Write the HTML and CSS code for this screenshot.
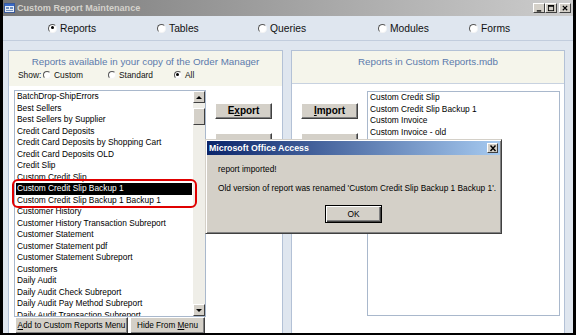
FILE: index.html
```html
<!DOCTYPE html>
<html lang="en">
<head>
    <meta charset="UTF-8">
    <title>Custom Report Maintenance</title>
    <link rel="stylesheet" href="styles.css">
</head>
<body>
<div class="window">
    <div class="titlebar">
        <svg class="app-icon" width="11" height="10" viewBox="0 0 11 10">
            <rect x="0.5" y="0.5" width="10" height="9" fill="#e8eef8" stroke="#3a5a9a"/>
            <rect x="1" y="1" width="9" height="2" fill="#3a6ac8"/>
            <rect x="2" y="4" width="3" height="2" fill="#7090c0"/>
            <rect x="6" y="4" width="3" height="2" fill="#7090c0"/>
            <rect x="2" y="7" width="7" height="1" fill="#7090c0"/>
        </svg>
        <span class="title">Custom Report Maintenance</span>
        <div class="win-buttons">
            <span class="wbtn"><svg width="9" height="8" viewBox="0 0 9 8"><rect x="2" y="6" width="5" height="1.5" fill="#000"/></svg></span>
            <span class="wbtn"><svg width="9" height="8" viewBox="0 0 9 8"><rect x="1.5" y="0.5" width="6" height="6" fill="none" stroke="#000"/><rect x="1.5" y="0.5" width="6" height="1.5" fill="#000"/></svg></span>
            <span class="wbtn close"><svg width="9" height="8" viewBox="0 0 9 8"><path d="M2 1 L7 6 M7 1 L2 6" stroke="#000" stroke-width="1.4"/></svg></span>
        </div>
    </div>

    <div class="form">
        <div class="types">
            <div class="opt opt-reports"><span class="radio on"></span>Reports</div>
            <div class="opt opt-tables"><span class="radio"></span>Tables</div>
            <div class="opt opt-queries"><span class="radio"></span>Queries</div>
            <div class="opt opt-modules"><span class="radio"></span>Modules</div>
            <div class="opt"><span class="radio"></span>Forms</div>
        </div>

        <div class="panels">
            <section class="panel panel-left">
                <div class="panel-head">
                    <div class="panel-title">Reports available in your copy of the Order Manager</div>
                    <div class="show-row">
                        <span class="show-label">Show:</span>
                        <span class="sopt sopt-custom"><span class="radio small"></span>Custom</span>
                        <span class="sopt sopt-standard"><span class="radio small"></span>Standard</span>
                        <span class="sopt"><span class="radio small on"></span>All</span>
                    </div>
                </div>
                <div class="panel-body">
                    <div class="list-col">
                        <div class="listbox">
                            <ul class="items">
                                <li>BatchDrop-ShipErrors</li>
                                <li>Best Sellers</li>
                                <li>Best Sellers by Supplier</li>
                                <li>Credit Card Deposits</li>
                                <li>Credit Card Deposits by Shopping Cart</li>
                                <li>Credit Card Deposits OLD</li>
                                <li>Credit Slip</li>
                                <li>Custom Credit Slip</li>
                                <li class="selected">Custom Credit Slip Backup 1</li>
                                <li>Custom Credit Slip Backup 1 Backup 1</li>
                                <li>Customer History</li>
                                <li>Customer History Transaction Subreport</li>
                                <li>Customer Statement</li>
                                <li>Customer Statement pdf</li>
                                <li>Customer Statement Subreport</li>
                                <li>Customers</li>
                                <li>Daily Audit</li>
                                <li>Daily Audit Check Subreport</li>
                                <li>Daily Audit Pay Method Subreport</li>
                                <li>Daily Audit Transaction Subreport</li>
                            </ul>
                            <div class="scrollbar">
                                <span class="sb-btn"><span class="arrow-up"></span></span>
                                <span class="sb-track"><span class="sb-thumb"></span></span>
                                <span class="sb-btn"><span class="arrow-down"></span></span>
                            </div>
                        </div>
                        <div class="menu-buttons">
                            <span class="btn small-btn btn-add"><u>A</u>dd to Custom Reports Menu</span>
                            <span class="btn small-btn btn-hide">Hide From <u>M</u>enu</span>
                        </div>
                    </div>
                    <div class="side-buttons">
                        <span class="btn big-btn">E<u>x</u>port</span>
                        <span class="btn big-btn"></span>
                    </div>
                </div>
            </section>

            <section class="panel panel-right">
                <div class="panel-head short">
                    <div class="panel-title">Reports in Custom Reports.mdb</div>
                </div>
                <div class="panel-body right-body">
                    <div class="side-buttons">
                        <span class="btn big-btn"><u>I</u>mport</span>
                        <span class="btn big-btn"></span>
                    </div>
                    <div class="listbox listbox-right">
                        <ul class="items">
                            <li>Custom Credit Slip</li>
                            <li>Custom Credit Slip Backup 1</li>
                            <li>Custom Invoice</li>
                            <li>Custom Invoice - old</li>
                        </ul>
                    </div>
                </div>
            </section>
        </div>
    </div>

    <div class="highlight"></div>

    <div class="dialog">
        <div class="dlg-title">
            <span>Microsoft Office Access</span>
            <span class="dlg-close"><svg width="8" height="7" viewBox="0 0 8 7"><path d="M1.5 0.5 L6.5 6 M6.5 0.5 L1.5 6" stroke="#000" stroke-width="1.4"/></svg></span>
        </div>
        <div class="dlg-body">
            <p class="dlg-line">report imported!</p>
            <p class="dlg-line second">Old version of report was renamed 'Custom Credit Slip Backup 1 Backup 1'.</p>
        </div>
        <div class="dlg-actions">
            <span class="btn ok-btn">OK</span>
        </div>
    </div>
</div>
</body>
</html>
```

FILE: styles.css
```css
body {
    margin: 0;
    background: #000;
    font-family: "Liberation Sans", Arial, sans-serif;
}

.window {
    position: relative;
    width: 576px;
    height: 335px;
    box-sizing: border-box;
    border-left: 3px solid #000;
    border-right: 3px solid #000;
    border-bottom: 2px solid #000;
    background: #dfe6ef;
    overflow: hidden;
}

/* window title bar (inactive) */
.titlebar {
    height: 16px;
    display: flex;
    align-items: center;
    background: linear-gradient(to right, #777, #cdcdcd);
}

.app-icon {
    margin: 0 2px 0 1px;
}

.title {
    color: #d4d2cc;
    font-weight: bold;
    font-size: 9.1px;
}

.win-buttons {
    margin-left: auto;
    margin-right: 2px;
    display: flex;
}

.wbtn {
    width: 12px;
    height: 10px;
    box-sizing: border-box;
    background: #d4d0c8;
    border: 1px solid;
    border-color: #fff #404040 #404040 #fff;
    display: flex;
    align-items: center;
    justify-content: center;
}

.wbtn svg {
    width: 8px;
    height: 7px;
}

.wbtn.close {
    margin-left: 2px;
}

/* object type row */
.types {
    height: 24px;
    border-bottom: 1px solid #c2cddd;
    display: flex;
    align-items: center;
    padding-left: 45px;
    font-size: 10.3px;
    color: #111;
}

.opt {
    display: flex;
    align-items: center;
    gap: 3px;
}

.opt-reports { width: 109px; }
.opt-tables { width: 101px; }
.opt-queries { width: 120px; }
.opt-modules { width: 91px; }

.radio {
    position: relative;
    width: 9px;
    height: 9px;
    box-sizing: border-box;
    border-radius: 50%;
    border: 1.5px solid;
    border-color: #555 #f4f4f4 #f4f4f4 #555;
    background: #fff;
    flex: none;
}

.radio.small {
    width: 8px;
    height: 8px;
}

.radio.on::after {
    content: "";
    position: absolute;
    left: 1.5px;
    top: 1.5px;
    width: 3px;
    height: 3px;
    border-radius: 50%;
    background: #000;
}

.radio.small.on::after {
    left: 1px;
    top: 1px;
}

/* the two panels */
.panels {
    display: flex;
    gap: 8px;
    padding-left: 5px;
    margin-top: 9px;
}

.panel {
    height: 283px;
    box-sizing: border-box;
    border: 1px solid #b3c1d6;
    border-bottom: none;
    background: #fff;
}

.panel-left { width: 275px; }
.panel-right { width: 274px; }

.panel-head {
    background: #f5f5eb;
    padding: 4px 0 5px;
}

.panel-head.short {
    height: 33px;
    box-sizing: border-box;
    padding: 4px 0 0;
    border-bottom: 1px solid #c8d2e0;
}

.panel-title {
    text-align: center;
    line-height: 13px;
    font-size: 9.8px;
    color: #5b7aab;
}

.show-row {
    margin-top: 1px;
    line-height: 12px;
    font-size: 8.4px;
    padding-left: 9px;
    display: flex;
    align-items: center;
    color: #111;
}

.show-label { width: 25px; }

.sopt {
    display: flex;
    align-items: center;
    gap: 3px;
}

.sopt-custom { width: 65px; }
.sopt-standard { width: 66px; }

.panel-body {
    display: flex;
    padding: 4px 0 0 5px;
}

.right-body {
    padding: 7px 0 0 9px;
}

.list-col {
    width: 192px;
}

.listbox {
    height: 227px;
    box-sizing: border-box;
    border: 1px solid #a9b8cc;
    display: flex;
    background: #fff;
}

.listbox-right {
    width: 193px;
    height: 225px;
    margin-left: 9px;
}

.items {
    flex: 1;
    margin: 0;
    padding: 0;
    list-style: none;
    overflow: hidden;
    font-size: 8.35px;
    line-height: 11.5px;
    color: #000;
}

.items li {
    margin: 0 1px;
    padding-left: 1px;
    white-space: nowrap;
}

.items li.selected {
    background: #000;
    color: #fff;
}

/* scrollbar */
.scrollbar {
    width: 12px;
    display: flex;
    flex-direction: column;
    background: #efeee8;
}

.sb-btn {
    height: 12px;
    box-sizing: border-box;
    background: #d4d0c8;
    border: 1px solid;
    border-color: #fff #404040 #404040 #fff;
    display: flex;
    align-items: center;
    justify-content: center;
}

.sb-track {
    flex: 1;
    padding-top: 5px;
}

.sb-thumb {
    display: block;
    height: 17px;
    box-sizing: border-box;
    background: #d4d0c8;
    border: 1px solid;
    border-color: #fff #404040 #404040 #fff;
}

.arrow-up,
.arrow-down {
    width: 0;
    height: 0;
    border-left: 3px solid transparent;
    border-right: 3px solid transparent;
}

.arrow-up { border-bottom: 3px solid #000; }
.arrow-down { border-top: 3px solid #000; }

/* buttons */
.btn {
    display: block;
    box-sizing: border-box;
    background: #d4d0c8;
    border: 1px solid;
    border-color: #fff #404040 #404040 #fff;
    box-shadow: inset -1px -1px #808080;
    text-align: center;
    color: #000;
    white-space: nowrap;
}

.side-buttons {
    display: flex;
    flex-direction: column;
    gap: 14px;
    margin-left: 9px;
    padding-top: 13px;
}

.right-body .side-buttons {
    margin-left: 0;
    padding-top: 12px;
}

.big-btn {
    width: 57px;
    height: 16px;
    font-size: 10px;
    font-weight: bold;
    line-height: 14px;
}

.menu-buttons {
    display: flex;
    gap: 2px;
    margin-left: 1px;
}

.small-btn {
    height: 17px;
    font-size: 8.2px;
    line-height: 15px;
    overflow: hidden;
}

.btn-add { width: 113px; }
.btn-hide { width: 75px; }

/* red annotation */
.highlight {
    position: absolute;
    left: 9px;
    top: 179px;
    width: 185px;
    height: 29px;
    box-sizing: border-box;
    border: 2px solid #e00000;
    border-radius: 6px;
}

/* message box */
.dialog {
    position: absolute;
    left: 202px;
    top: 139px;
    width: 297px;
    height: 95px;
    box-sizing: border-box;
    padding: 1px;
    background: #d4d0c8;
    border: 1px solid;
    border-color: #d4d0c8 #404040 #404040 #d4d0c8;
    box-shadow: inset 1px 1px #fff, inset -1px -1px #808080;
}

.dlg-title {
    height: 14px;
    display: flex;
    align-items: center;
    justify-content: space-between;
    padding: 0 2px 0 2px;
    background: linear-gradient(to right, #0a246a, #a6caf0);
    color: #fff;
    font-weight: bold;
    font-size: 8.8px;
}

.dlg-close {
    width: 11px;
    height: 10px;
    box-sizing: border-box;
    background: #d4d0c8;
    border: 1px solid;
    border-color: #fff #404040 #404040 #fff;
    display: flex;
    align-items: center;
    justify-content: center;
}

.dlg-body {
    padding: 8px 0 0 11px;
}

.dlg-line {
    margin: 0;
    line-height: 12px;
    font-size: 8.3px;
    color: #000;
    white-space: nowrap;
}

.dlg-line.second {
    margin-top: 7px;
}

.dlg-actions {
    margin-top: 11px;
    display: flex;
    justify-content: center;
}

.ok-btn {
    width: 57px;
    height: 18px;
    border: 1px solid #000;
    box-shadow: inset 1px 1px #fff, inset -1px -1px #404040, inset -2px -2px #808080;
    font-size: 8.4px;
    line-height: 16px;
}
```
